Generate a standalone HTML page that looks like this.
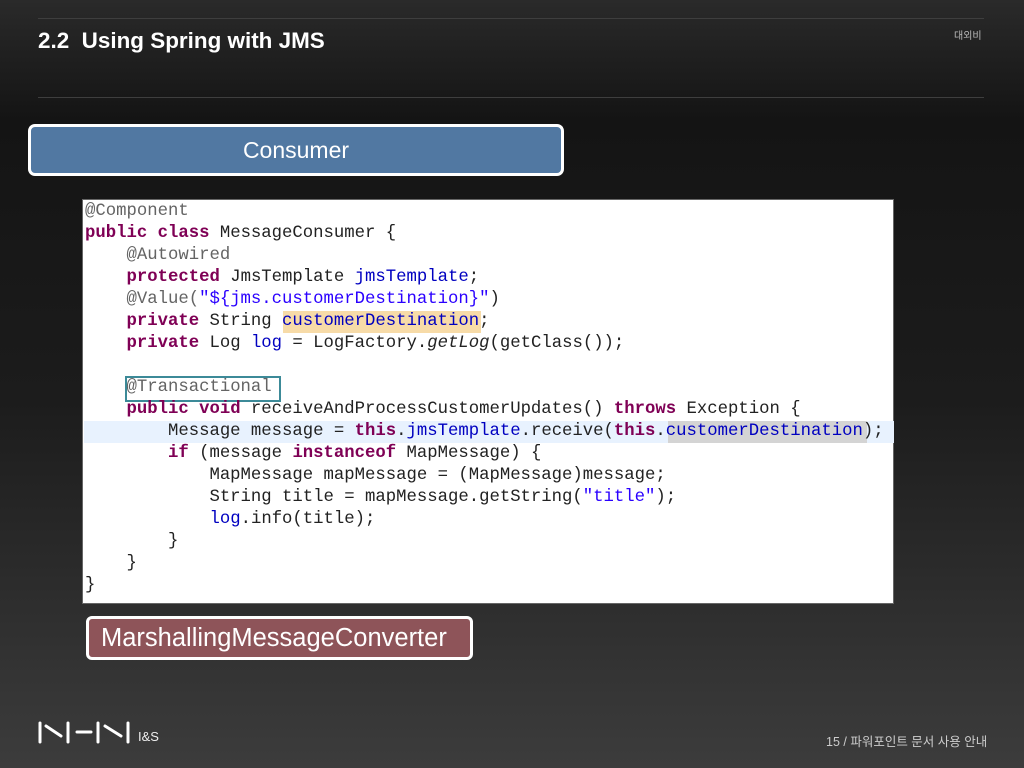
<!DOCTYPE html>
<html><head><meta charset="utf-8"><style>
*{margin:0;padding:0;box-sizing:border-box}
body{width:1024px;height:768px;overflow:hidden;position:relative;background:linear-gradient(#2a2a2a 0px,#141414 120px,#1c1c1c 400px,#3c3c3c 768px);font-family:"Liberation Sans","Noto Sans CJK KR",sans-serif;color:#fff}
.line{position:absolute;left:38px;width:946px;height:1px;background:#3e3e3e}
.title{position:absolute;left:38px;top:28px;font-size:22px;font-weight:bold;letter-spacing:0;transform:scaleX(1.02);transform-origin:left}
.conf{position:absolute;left:954px;top:27px;font-size:10px;color:#bbb}
.box1{position:absolute;left:28px;top:124px;width:536px;height:52px;border:3px solid #fff;border-radius:7px;background:#5178a2;text-align:center;font-size:23px;line-height:46px;color:#fff}
.code{position:absolute;left:82px;top:199px;width:812px;height:405px;background:#fff;border:1px solid #666}
pre{position:absolute;left:2px;top:1px;font-family:"Liberation Mono",monospace;font-size:17.3px;line-height:22px;color:#222;letter-spacing:0}
.k{color:#7f0055;font-weight:bold}.a{color:#646464}.f{color:#0000c0}.s{color:#2a00ff}
.hl{position:absolute;left:1px;top:221px;width:810px;height:22px;background:#e8f2fe}
.tr{position:absolute;left:42px;top:176px;width:156px;height:26px;border:2px solid #3c8a98}
.box2{position:absolute;left:86px;top:616px;width:387px;height:44px;border:3px solid #fff;border-radius:6px;background:#8e5459;font-size:25.5px;line-height:38px;padding-left:12px;color:#fff;white-space:nowrap}
.foot{position:absolute;left:826px;top:731px;font-size:12.5px;color:#ccc;white-space:nowrap}
.is{position:absolute;left:138px;top:729px;font-size:13px;color:#eee}
</style></head><body>
<div class="line" style="top:18px"></div>
<div class="line" style="top:97px"></div>
<div class="title">2.2&nbsp; Using Spring with JMS</div>
<div class="conf">대외비</div>
<div class="box1">Consumer</div>
<div class="code">
<div class="hl"></div>
<div class="tr"></div>
<div style="position:absolute;left:200px;top:111px;width:198px;height:22px;background:#f7dba8"></div>
<div style="position:absolute;left:585px;top:221px;width:199px;height:22px;background:#d4d4d4"></div>
<pre><span class="a">@Component</span>
<span class="k">public class</span> MessageConsumer {
    <span class="a">@Autowired</span>
    <span class="k">protected</span> JmsTemplate <span class="f">jmsTemplate</span>;
    <span class="a">@Value(</span><span class="s">"${jms.customerDestination}"</span>)
    <span class="k">private</span> String <span class="f">customerDestination</span>;
    <span class="k">private</span> Log <span class="f">log</span> = LogFactory.<i>getLog</i>(getClass());

    <span class="a">@Transactional</span>
    <span class="k">public void</span> receiveAndProcessCustomerUpdates() <span class="k">throws</span> Exception {
        Message message = <span class="k">this</span>.<span class="f">jmsTemplate</span>.receive(<span class="k">this</span>.<span class="f">customerDestination</span>);
        <span class="k">if</span> (message <span class="k">instanceof</span> MapMessage) {
            MapMessage mapMessage = (MapMessage)message;
            String title = mapMessage.getString(<span class="s">"title"</span>);
            <span class="f">log</span>.info(title);
        }
    }
}</pre>
</div>
<div class="box2">MarshallingMessageConverter</div>
<svg style="position:absolute;left:0;top:0" width="140" height="768">
<g stroke="#fff" stroke-width="3" stroke-linecap="round" fill="none">
<line x1="40" y1="723" x2="40" y2="742"/><line x1="46" y1="726" x2="61" y2="736"/><line x1="68" y1="723" x2="68" y2="742"/>
<line x1="77" y1="732" x2="91" y2="732"/>
<line x1="98" y1="723" x2="98" y2="742"/><line x1="105" y1="726" x2="121" y2="736"/><line x1="128" y1="723" x2="128" y2="742"/>
</g></svg>
<div class="is">I&amp;S</div>
<div class="foot">15 / 파워포인트 문서 사용 안내</div>
</body></html>
